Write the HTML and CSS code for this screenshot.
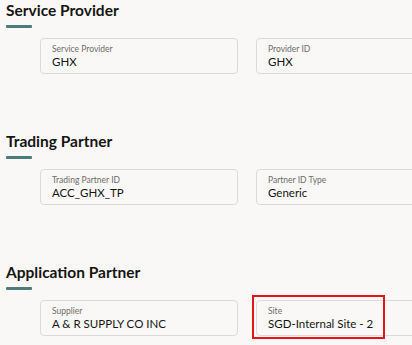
FILE: index.html
```html
<!DOCTYPE html>
<html>
<head>
<meta charset="utf-8">
<link rel="stylesheet" href="styles.css">
</head>
<body>
<div class="page">
  <section class="section">
    <h2 class="title">Service Provider</h2>
    <div class="bar"></div>
    <div class="fields">
      <div class="field"><div class="label">Service Provider</div><div class="value">GHX</div></div>
      <div class="field"><div class="label">Provider ID</div><div class="value">GHX</div></div>
    </div>
  </section>
  <section class="section">
    <h2 class="title">Trading Partner</h2>
    <div class="bar"></div>
    <div class="fields">
      <div class="field"><div class="label">Trading Partner ID</div><div class="value">ACC_GHX_TP</div></div>
      <div class="field"><div class="label">Partner ID Type</div><div class="value">Generic</div></div>
    </div>
  </section>
  <section class="section">
    <h2 class="title">Application Partner</h2>
    <div class="bar"></div>
    <div class="fields">
      <div class="field"><div class="label">Supplier</div><div class="value">A &amp; R SUPPLY CO INC</div></div>
      <div class="field"><div class="label">Site</div><div class="value">SGD-Internal Site - 2</div><div class="highlight"></div></div>
    </div>
  </section>
</div>
</body>
</html>
```
FILE: styles.css
```css
html, body {
  margin: 0;
  padding: 0;
  background: #f9f8f6;
  overflow: hidden;
}
body {
  font-family: Lato, "Noto Sans", sans-serif;
  color: #161513;
  width: 412px;
  height: 345px;
}
.page {
  display: flex;
  flex-direction: column;
}
.section {
  padding-left: 6px;
  margin-bottom: 57px;
}
.title {
  margin: 0;
  font-size: 15.5px;
  line-height: 20px;
  font-weight: 700;
  color: #161513;
}
.bar {
  width: 26px;
  height: 3px;
  background: #4c7d7a;
  margin-top: 5px;
  border-radius: 1px;
}
.fields {
  display: flex;
  gap: 18px;
  padding-left: 34px;
  margin-top: 10px;
}
.field {
  position: relative;
  flex: 0 0 198px;
  height: 36px;
  box-sizing: border-box;
  border: 1px solid #dcdad7;
  border-radius: 4px;
  padding: 5px 11px 0;
}
.label {
  font-size: 8.5px;
  line-height: 11px;
  color: #6f6c69;
}
.value {
  font-size: 11.5px;
  line-height: 14px;
  color: #161513;
}
.highlight {
  position: absolute;
  left: -5px;
  top: -6px;
  width: 133px;
  height: 44px;
  box-sizing: border-box;
  border: 2px solid #e5141b;
}
```
